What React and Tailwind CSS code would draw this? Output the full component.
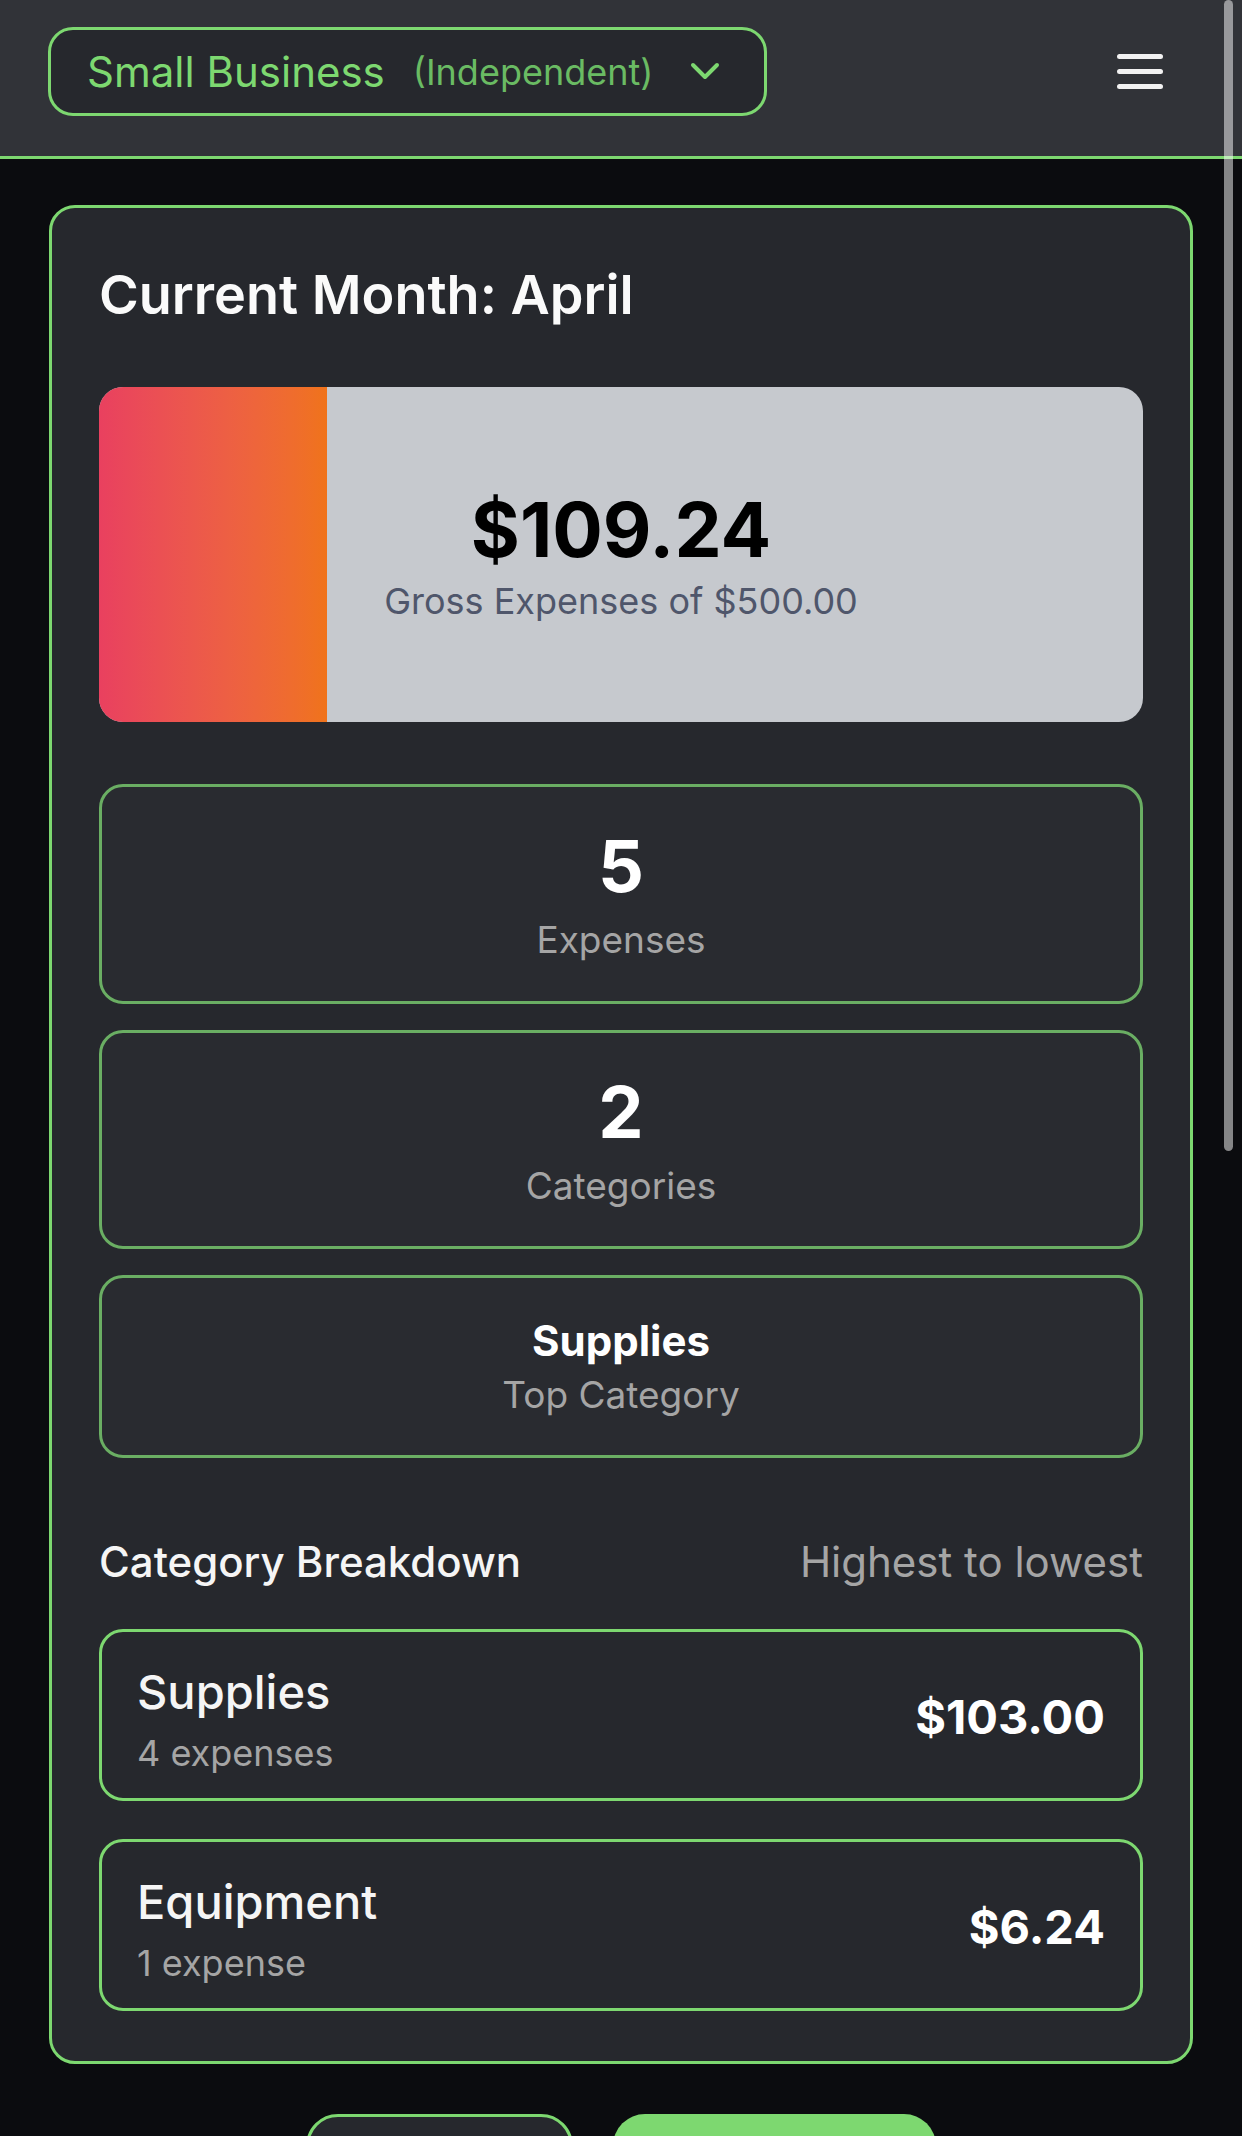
import React from "react";

const categories = [
    { name: "Supplies", count: "4 expenses", amount: "$103.00" },
    { name: "Equipment", count: "1 expense", amount: "$6.24" },
];

const spent = 109.24;
const budget = 500;

function Chevron() {
    return (
        <svg width="32" height="20" viewBox="0 0 32 20" fill="none">
            <polyline
                points="4,3 16,15 28,3"
                stroke="#7dd870"
                strokeWidth="4"
                strokeLinecap="round"
                strokeLinejoin="round"
            />
        </svg>
    );
}

function Hamburger() {
    return (
        <svg width="46" height="35" viewBox="0 0 46 35" fill="none">
            <g stroke="#f2f2f2" strokeWidth="5" strokeLinecap="round">
                <line x1="2.5" y1="2.5" x2="43.5" y2="2.5" />
                <line x1="2.5" y1="17.5" x2="43.5" y2="17.5" />
                <line x1="2.5" y1="32.5" x2="43.5" y2="32.5" />
            </g>
        </svg>
    );
}

function StatCard({ value, label, height }) {
    return (
        <div
            className={`${height} border-[3px] border-[#6aae63] rounded-[24px] bg-[#292b30] flex flex-col items-center justify-center`}
        >
            <div className="text-[72px] font-bold leading-[80px] text-white">
                {value}
            </div>
            <div className="mt-[12px] text-[37px] leading-[44px] text-[#a5a5a5]">
                {label}
            </div>
        </div>
    );
}

export default function App() {
    const pct = (spent / budget) * 100;

    return (
        <div className="relative h-[2136px] overflow-hidden bg-[#0b0c0f] font-['Inter',sans-serif]">
            <header className="h-[159px] bg-[#313338] border-b-[3px] border-[#7dd870] pt-[27px] pl-[48px] pr-[79px]">
                <div className="h-[89px] flex items-center justify-between">
                    <button className="h-[89px] w-[719px] border-[3px] border-[#7dd870] rounded-[25px] bg-[#26282d] flex items-center pl-[36px]">
                        <span className="text-[42px] leading-none text-[#7dd870]">
                            Small Business
                        </span>
                        <span className="ml-[28px] text-[36px] leading-none text-[#6abb63]">
                            (Independent)
                        </span>
                        <span className="ml-[36px] flex">
                            <Chevron />
                        </span>
                    </button>
                    <Hamburger />
                </div>
            </header>

            <main className="px-[49px] pt-[46px]">
                <div className="border-[3px] border-[#7dd870] rounded-[26px] bg-[#26282d] px-[47px] pt-[54px] pb-[50px]">
                    <h2 className="text-[54px] font-semibold leading-[66px] text-[#fafafa]">
                        Current Month: April
                    </h2>

                    <div className="relative mt-[59px] h-[335px] rounded-[24px] bg-[#c6c9ce] overflow-hidden flex flex-col items-center justify-center">
                        <div
                            className="absolute inset-y-0 left-0 bg-gradient-to-r from-[#e9405f] to-[#f0731a]"
                            style={{ width: `${pct}%` }}
                        />
                        <div className="relative pt-[4px] text-[75px] font-bold leading-[80px] text-black">
                            $109.24
                        </div>
                        <div className="relative mt-[9px] text-[36px] leading-[44px] text-[#4f566b]">
                            Gross Expenses of $500.00
                        </div>
                    </div>

                    <div className="mt-[62px] flex flex-col gap-[26px]">
                        <StatCard value="5" label="Expenses" height="h-[220px]" />
                        <StatCard value="2" label="Categories" height="h-[219px]" />
                        <div className="h-[183px] border-[3px] border-[#6aae63] rounded-[24px] bg-[#292b30] flex flex-col items-center justify-center">
                            <div className="text-[42px] font-bold leading-[50px] text-white">
                                Supplies
                            </div>
                            <div className="mt-[7px] text-[37px] leading-[44px] text-[#a5a5a5]">
                                Top Category
                            </div>
                        </div>
                    </div>

                    <div className="mt-[79px] flex items-center justify-between leading-[50px]">
                        <span className="text-[42px] font-medium text-[#f5f5f5]">
                            Category Breakdown
                        </span>
                        <span className="text-[42px] text-[#a5a5a5]">
                            Highest to lowest
                        </span>
                    </div>

                    <div className="mt-[42px] flex flex-col gap-[38px]">
                        {categories.map((c) => (
                            <div
                                key={c.name}
                                className="h-[172px] border-[3px] border-[#7dd870] rounded-[24px] bg-[#26282d] px-[35px] flex items-center justify-between"
                            >
                                <div className="pt-[8px]">
                                    <div className="text-[47px] font-medium leading-[56px] text-[#f5f5f5]">
                                        {c.name}
                                    </div>
                                    <div className="mt-[11px] text-[36px] leading-[44px] text-[#a5a5a5]">
                                        {c.count}
                                    </div>
                                </div>
                                <div className="pt-[4px] text-[47px] font-bold leading-[56px] text-white">
                                    {c.amount}
                                </div>
                            </div>
                        ))}
                    </div>
                </div>

                <div className="mt-[50px] flex justify-center gap-[40px]">
                    <button className="w-[267px] h-[120px] border-[3px] border-[#7dd870] rounded-[32px] bg-[#26282d]" />
                    <button className="w-[323px] h-[120px] rounded-[32px] bg-[#7dd870]" />
                </div>
            </main>

            {/* scrollbar thumb */}
            <div className="absolute top-0 right-[9px] w-[9px] h-[1151px] rounded-full bg-white/50" />
        </div>
    );
}
